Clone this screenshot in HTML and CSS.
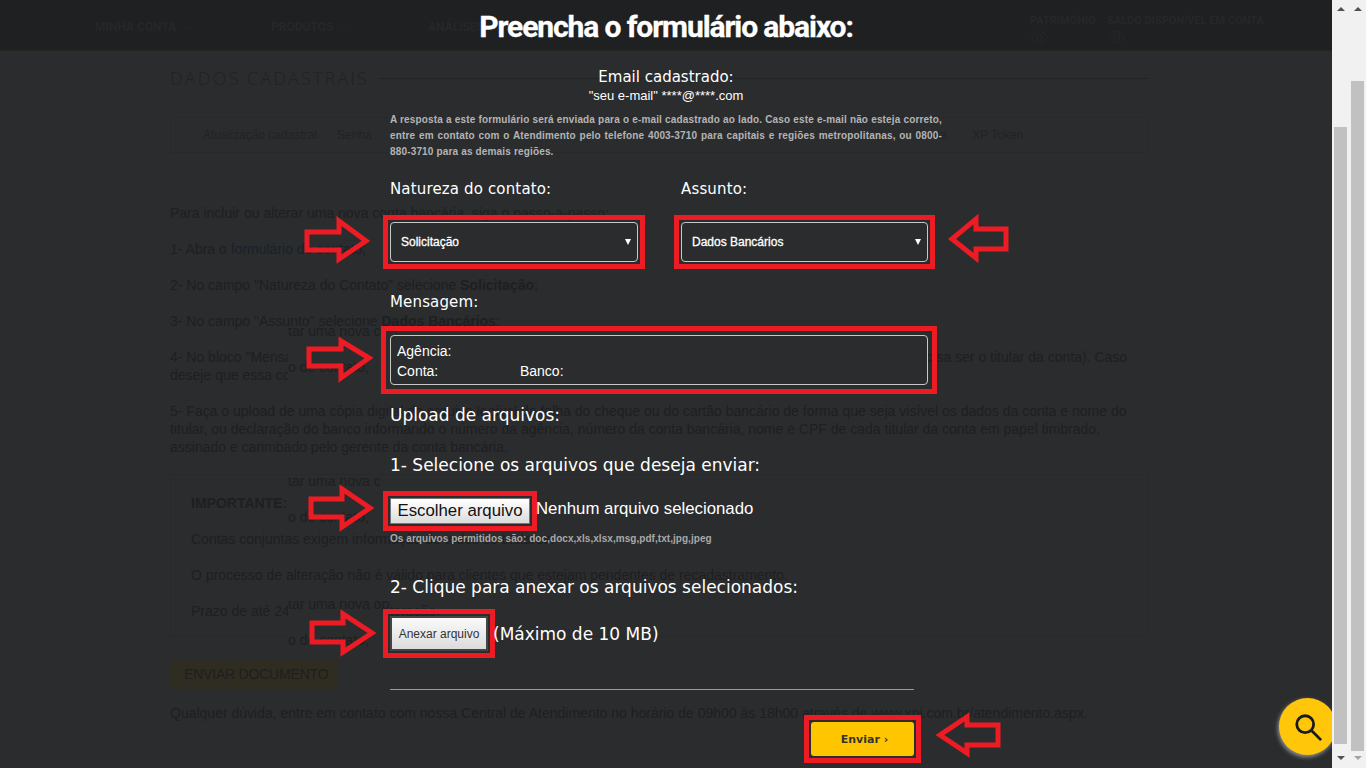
FILE: index.html
```html
<!DOCTYPE html>
<html lang="pt-BR">

<head>
    <meta charset="utf-8" />
    <title>Preencha o formulário abaixo</title>
    <meta name="viewport" content="width=device-width, initial-scale=1" />
    <link rel="stylesheet" href="styles.css">
</head>

<body>
    <div class="screen">
        <div class="viewport">
            <!-- dimmed site behind the form -->
            <div class="site">
                <header class="topbar">
                    <nav class="topnav">
                        <a class="nav-minha">MINHA CONTA
                            <svg class="chevron" viewBox="0 0 12 7"><path d="M1 1l5 5 5-5" /></svg>
                        </a>
                        <a class="nav-produtos">PRODUTOS
                            <svg class="chevron" viewBox="0 0 12 7"><path d="M1 1l5 5 5-5" /></svg>
                        </a>
                        <a class="nav-analises">ANÁLISES</a>
                    </nav>
                    <div class="balance balance-first">
                        <span>PATRIMÔNIO</span>
                        <svg class="eye" viewBox="0 0 20 14"><path d="M1 7c3-4 6-6 9-6s6 2 9 6c-3 4-6 6-9 6s-6-2-9-6z" /><circle cx="10" cy="7" r="3.5" /><path d="M5 13L15 1" /></svg>
                    </div>
                    <div class="balance">
                        <span>SALDO DISPONÍVEL EM CONTA</span>
                        <svg class="eye" viewBox="0 0 20 14"><path d="M1 7c3-4 6-6 9-6s6 2 9 6c-3 4-6 6-9 6s-6-2-9-6z" /><circle cx="10" cy="7" r="3.5" /><path d="M5 13L15 1" /></svg>
                    </div>
                </header>
                <main class="content">
                    <div class="page-title">
                        <h1>DADOS CADASTRAIS</h1>
                    </div>
                    <div class="tabs">
                        <span class="tab-first">Atualização cadastral</span>
                        <span>Senha</span>
                        <span class="tab-conta">Conta</span>
                        <span>XP Token</span>
                    </div>
                    <p class="intro">Para incluir ou alterar uma nova conta bancária, siga o passo-a-passo:</p>
                    <p>1- Abra o <a class="link">formulário de contato</a>;</p>
                    <p>2- No campo "Natureza do Contato" selecione <b>Solicitação</b>;</p>
                    <p>3- No campo "Assunto" selecione <b>Dados Bancários</b>;</p>
                    <p>4- No bloco "Mensagem" preencha os dados da agência, conta e banco da nova conta a cadastrar (a conta informada precisa ser o titular da conta). Caso<br>deseje que essa conta seja a principal, informe também;</p>
                    <p>5- Faça o upload de uma cópia digital do arquivo legível da folha do cheque ou do cartão bancário de forma que seja visível os dados da conta e nome do<br>titular, ou declaração do banco informando o número da agência, número da conta bancária, nome e CPF de cada titular da conta em papel timbrado,<br>assinado e carimbado pelo gerente da conta bancária.</p>
                    <div class="notice">
                        <p><b>IMPORTANTE:</b></p>
                        <p>Contas conjuntas exigem informação de todos os titulares.</p>
                        <p>O processo de alteração não é válido para clientes que estejam pendentes de recadastramento.</p>
                        <p>Prazo de até 24h úteis para a alteração.</p>
                    </div>
                    <a class="send-doc">ENVIAR DOCUMENTO</a>
                    <p class="help">Qualquer dúvida, entre em contato com nossa Central de Atendimento no horário de 09h00 às 18h00 através de www.xpi.com.br/atendimento.aspx.</p>
                </main>
                <div class="ghost ghost-a"><div class="ghost-text">tar uma nova c<br>o de contato,</div></div>
                <div class="ghost ghost-b"><div class="ghost-text">tar uma nova c<br>o de contato,</div></div>
                <div class="ghost ghost-c"><div class="ghost-text">tar uma nova opção<br>o de contato,</div></div>
            </div>

            <div class="overlay">
                <h2 class="title">Preencha o formulário abaixo:</h2>
                <div class="email-label">Email cadastrado:</div>
                <div class="email-value">"seu e-mail" ****@****.com</div>

                <form class="form">
                    <p class="note">A resposta a este formulário será enviada para o e-mail cadastrado ao lado. Caso este e-mail não esteja correto, entre em contato com o Atendimento pelo telefone 4003-3710 para capitais e regiões metropolitanas, ou 0800-880-3710 para as demais regiões.</p>

                    <div class="field-row">
                        <div class="field">
                            <label class="label">Natureza do contato:</label>
                            <div class="select-wrap mark">
                                <select class="select"><option>Solicitação</option></select>
                            </div>
                        </div>
                        <div class="field">
                            <label class="label">Assunto:</label>
                            <div class="select-wrap mark">
                                <select class="select"><option>Dados Bancários</option></select>
                            </div>
                        </div>
                    </div>

                    <label class="label label-message">Mensagem:</label>
                    <div class="message-wrap mark mark-wide">
                        <textarea class="message" readonly>Agência:
Conta:                     Banco:</textarea>
                    </div>

                    <div class="label label-big label-upload">Upload de arquivos:</div>
                    <div class="label label-big label-step1">1- Selecione os arquivos que deseja enviar:</div>
                    <div class="file-row">
                        <button type="button" class="file-btn mark">Escolher arquivo</button>
                        <span class="file-name">Nenhum arquivo selecionado</span>
                    </div>
                    <div class="allowed">Os arquivos permitidos são: doc,docx,xls,xlsx,msg,pdf,txt,jpg,jpeg</div>
                    <div class="label label-big label-step2">2- Clique para anexar os arquivos selecionados:</div>
                    <div class="attach-row">
                        <button type="button" class="attach-btn mark">Anexar arquivo</button>
                        <span class="label label-big">(Máximo de 10 MB)</span>
                    </div>
                    <hr class="rule">
                    <div class="submit-wrap mark">
                        <button type="button" class="submit">Enviar ›</button>
                    </div>
                </form>
            </div>

            <!-- red arrows drawn on top of the form -->
            <svg class="arrows" viewBox="0 0 1332 768">
                <polygon points="307,232 339,232 339,221 366,241 339,259 339,250 307,250" />
                <polygon points="1006,229 976,229 976,219 952,239 976,258 976,249 1006,249" />
                <polygon points="309,349 341,349 341,341 369,358 341,378 341,366 309,366" />
                <polygon points="311,499 342,499 342,489 370,508 342,527 342,517 311,517" />
                <polygon points="312,623 343,623 343,614 372,633 343,652 343,642 312,642" />
                <polygon points="998,725 967,725 967,717 940,735 967,753 967,745 998,745" />
            </svg>

            <button class="fab" type="button">
                <svg viewBox="0 0 32 32"><circle cx="13" cy="13" r="9" /><path d="M20 20l10 10" /></svg>
            </button>
        </div>

        <div class="scrollbar scrollbar-a">
            <span class="arrow-up"></span>
            <div class="thumb"></div>
            <span class="arrow-down"></span>
        </div>
        <div class="scrollbar scrollbar-b">
            <span class="arrow-up"></span>
            <div class="thumb"></div>
            <span class="arrow-down"></span>
        </div>
    </div>
</body>

</html>
```

FILE: styles.css
```css
* {
    box-sizing: border-box;
}

html,
body {
    margin: 0;
    height: 100%;
    overflow: hidden;
}

body {
    font-family: "Liberation Sans", Arial, sans-serif;
    background: #2b2c2e;
}

.screen {
    display: flex;
    height: 768px;
}

.viewport {
    position: relative;
    flex: 1;
    overflow: hidden;
    background: #2b2c2e;
}

/* Site behind the overlay */
.site {
    color: #1e1f21;
    font-size: 14px;
    line-height: 18px;
}

.topbar {
    display: flex;
    align-items: flex-start;
    height: 51px;
    background: #1f2021;
    border-bottom: 1px solid #26251f;
    font-family: Roboto, sans-serif;
    font-size: 12px;
    font-weight: 700;
    color: #262729;
}

.topnav {
    display: flex;
    padding: 18px 0 0 95px;
    width: 1030px;
}

.nav-minha {
    width: 176px;
}

.nav-produtos {
    width: 157px;
}

.chevron {
    width: 11px;
    height: 7px;
    margin-left: 2px;
    fill: none;
    stroke: #262729;
    stroke-width: 1;
}

.balance {
    display: flex;
    flex-direction: column;
    padding-top: 12px;
    font-size: 11px;
    line-height: 18px;
}

.balance-first {
    width: 77px;
}

.eye {
    width: 19px;
    height: 14px;
    fill: none;
    stroke: #262729;
    stroke-width: 1;
}

.content {
    width: 978px;
    margin-left: 170px;
}

.page-title {
    display: flex;
    align-items: center;
    height: 20px;
    margin-top: 17px;
}

.page-title h1 {
    margin: 0;
    font-family: "Open Sans", sans-serif;
    font-size: 18px;
    font-weight: 300;
    letter-spacing: 2.1px;
    color: #212224;
    white-space: nowrap;
}

.page-title::after {
    content: "";
    flex: 1;
    margin-left: 9px;
    height: 1px;
    background: #232426;
}

.tabs {
    display: flex;
    align-items: center;
    height: 36px;
    margin-top: 29px;
    padding-left: 32px;
    border: 1px solid #28292b;
    font-size: 12px;
    color: #222325;
}

.tab-first {
    margin-right: 20px;
}

.tab-conta {
    margin-left: auto;
    margin-right: 25px;
}

.tabs span:last-child {
    margin-right: 124px;
}

.content p {
    margin: 0 0 18px;
    white-space: nowrap;
}

.content .intro {
    margin-top: 51px;
}

.link {
    color: #18212a;
}

.notice {
    height: 163px;
    margin-top: 18px;
    padding: 19px 20px 0;
    border: 1px solid #28292b;
}

.send-doc {
    display: block;
    width: 167px;
    height: 30px;
    margin-top: 22px;
    padding-left: 14px;
    line-height: 30px;
    letter-spacing: -.2px;
    background: #2f2c22;
    color: #1f1f1e;
}

.content .help {
    margin-top: 15px;
}

.ghost {
    position: absolute;
    left: 288px;
    width: 102px;
    height: 55px;
    overflow: hidden;
    line-height: 36px;
    white-space: nowrap;
    background: #2b2c2e;
    color: #1e1f21;
}

.ghost-text {
    margin-top: -15px;
}

.ghost-a {
    top: 328px;
}

.ghost-b {
    top: 478px;
}

.ghost-c {
    top: 601px;
}

/* Form overlay */
.overlay {
    position: absolute;
    top: 0;
    left: 0;
    width: 100%;
    color: #fff;
    text-align: center;
}

.title {
    margin: 0;
    font-family: Roboto, sans-serif;
    font-size: 30px;
    font-weight: 700;
    line-height: 54px;
    letter-spacing: -1.1px;
    -webkit-text-stroke: .3px #fff;
}

.email-label {
    margin-top: 13px;
    font-family: "DejaVu Sans", sans-serif;
    font-size: 15px;
    line-height: 20px;
}

.email-value {
    font-size: 13px;
    line-height: 18px;
}

.form {
    width: 560px;
    margin-left: 390px;
    text-align: left;
}

.note {
    width: 552px;
    margin: 7px 0 0;
    font-size: 10px;
    font-weight: 700;
    letter-spacing: .16px;
    line-height: 16px;
    text-align: justify;
    color: #b4b4b4;
}

.field-row {
    display: grid;
    grid-template-columns: 248px 247px;
    column-gap: 43px;
    margin-top: 19px;
}

.label {
    display: block;
    font-family: "DejaVu Sans", sans-serif;
    font-size: 15px;
    letter-spacing: .15px;
    line-height: 20px;
    white-space: nowrap;
}

.label-big {
    font-size: 17px;
    letter-spacing: 0;
}

.mark {
    outline: 5px solid #ed1c24;
    outline-offset: 2px;
}

.mark-wide {
    outline-offset: 4px;
}

.select-wrap {
    position: relative;
    height: 40px;
    margin-top: 23px;
}

.select-wrap::after {
    content: "";
    position: absolute;
    right: 7px;
    top: 17px;
    border-left: 3px solid transparent;
    border-right: 3px solid transparent;
    border-top: 6px solid #fff;
}

.select {
    display: block;
    width: 100%;
    height: 100%;
    padding: 0 10px;
    appearance: none;
    background: #2b2c2e;
    border: 1px solid #c8c8c8;
    border-radius: 4px;
    color: #fff;
    font-family: "Liberation Sans", Arial, sans-serif;
    font-size: 12px;
    -webkit-text-stroke: .3px #fff;
}

.label-message {
    margin-top: 30px;
}

.message-wrap {
    width: 538px;
    height: 50px;
    margin-top: 23px;
}

.message {
    display: block;
    width: 100%;
    height: 100%;
    padding: 5px 6px;
    resize: none;
    overflow: hidden;
    white-space: pre;
    background: #2b2c2e;
    border: 1px solid #c8c8c8;
    border-radius: 4px;
    color: #fff;
    font-family: "Liberation Sans", Arial, sans-serif;
    font-size: 14px;
    line-height: 20px;
}

.label-upload {
    margin-top: 20px;
}

.label-step1 {
    margin-top: 30px;
}

.file-row {
    display: flex;
    align-items: center;
    height: 26px;
    margin-top: 23px;
}

.file-btn {
    width: 140px;
    height: 26px;
    padding: 0;
    background: linear-gradient(#fff, #dcdcdc);
    border: 1px solid #777;
    border-radius: 0;
    color: #111;
    font-family: "Liberation Sans", Arial, sans-serif;
    font-size: 16.8px;
}

.file-name {
    margin-left: 6px;
    margin-top: -4px;
    font-size: 16.8px;
}

.allowed {
    margin-top: 8px;
    font-size: 10px;
    font-weight: 700;
    letter-spacing: .05px;
    line-height: 14px;
    color: #a8a8a8;
}

.label-step2 {
    margin-top: 31px;
}

.attach-row {
    display: flex;
    align-items: center;
    height: 35px;
    margin-top: 19px;
}

.attach-btn {
    width: 98px;
    height: 35px;
    padding: 0;
    margin-right: 5px;
    background: linear-gradient(#fafafa, #dcdcdc);
    border: 2px solid #444;
    border-radius: 0;
    color: #333;
    font-family: "Liberation Sans", Arial, sans-serif;
    font-size: 12px;
}

.rule {
    width: 524px;
    height: 1px;
    margin: 38px 0 0;
    border: 0;
    background: #9a9a9a;
}

.submit-wrap {
    width: 103px;
    height: 34px;
    margin: 32px 0 0 421px;
}

.submit {
    display: block;
    width: 100%;
    height: 100%;
    padding: 0 0 0 4px;
    background: #ffc600;
    border: 0;
    border-radius: 3px;
    color: #333;
    font-family: "DejaVu Sans", sans-serif;
    font-size: 11px;
    font-weight: 700;
}

.arrows {
    position: absolute;
    top: 0;
    left: 0;
    width: 1332px;
    height: 768px;
    pointer-events: none;
}

.arrows polygon {
    fill: none;
    stroke: #ed1c24;
    stroke-width: 5;
}

.fab {
    position: absolute;
    left: 1279px;
    top: 698px;
    display: flex;
    align-items: center;
    justify-content: center;
    width: 57px;
    height: 57px;
    padding: 0;
    border: 0;
    border-radius: 50%;
    background: #ffc60a;
    box-shadow: -1px 2px 4px rgba(255, 255, 255, .5);
}

.fab svg {
    width: 30px;
    height: 30px;
    fill: none;
    stroke: #1a1a1a;
    stroke-width: 3;
}

/* Two browser scrollbars side by side */
.scrollbar {
    position: relative;
    width: 17px;
    background: #f1f1f1;
    display: flex;
    flex-direction: column;
    align-items: center;
}

.thumb {
    width: 13px;
    background: #c1c1c1;
}

.scrollbar-a .thumb {
    height: 617px;
    margin-top: 116px;
}

.scrollbar-b .thumb {
    height: 670px;
    margin-top: 70px;
}

.arrow-up {
    margin-top: 7px;
    border-left: 4px solid transparent;
    border-right: 4px solid transparent;
    border-bottom: 4px solid #505050;
}

.arrow-down {
    margin-top: 12px;
    border-left: 4px solid transparent;
    border-right: 4px solid transparent;
    border-top: 4px solid #505050;
}

.scrollbar-b .arrow-down {
    margin-top: 5px;
    border-top-color: #a3a3a3;
}
```
